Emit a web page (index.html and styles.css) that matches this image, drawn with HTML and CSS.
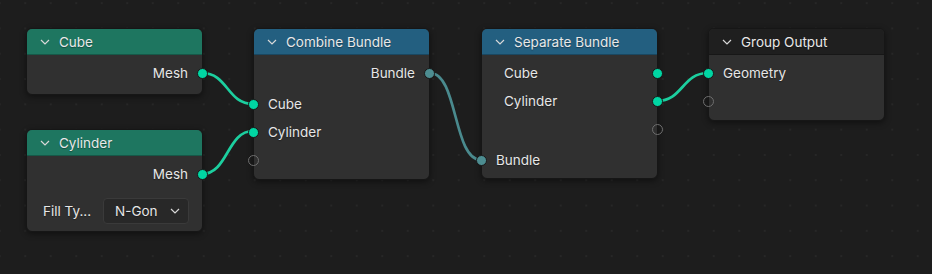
FILE: index.html
```html
<!DOCTYPE html>
<html lang="en">
<head>
    <meta charset="UTF-8">
    <title>Node Editor</title>
    <link rel="stylesheet" href="styles.css">
</head>
<body>
    <div class="canvas">
        <svg class="wires" width="932" height="274">
            <path class="wire wire-geo" d="M202,73 C228,73 227,104 253,104" />
            <path class="wire wire-geo" d="M202,174 C228,174 227,131 253,131" />
            <path class="wire wire-bundle" d="M430,73 C458,73 453,160 481,160" />
            <path class="wire wire-geo" d="M657,101 C683,101 682,73 708,73" />
        </svg>

        <!-- Cube -->
        <div class="node n-cube">
            <div class="node-header hd-geo">
                <svg class="chev" width="10" height="6"><path d="M1 1l4 4 4-4" /></svg>
                Cube
            </div>
            <div class="node-body pb-8">
                <div class="row out"><span>Mesh</span><i class="socket s-geo"></i></div>
            </div>
        </div>

        <!-- Cylinder -->
        <div class="node n-cylinder">
            <div class="node-header hd-geo">
                <svg class="chev" width="10" height="6"><path d="M1 1l4 4 4-4" /></svg>
                Cylinder
            </div>
            <div class="node-body pb-8">
                <div class="row out"><span>Mesh</span><i class="socket s-geo"></i></div>
                <div class="row prop">
                    <span class="prop-label">Fill Ty...</span>
                    <div class="dropdown">
                        <span>N-Gon</span>
                        <svg class="dd-chev" width="10" height="6"><path d="M1 1l4 4 4-4" /></svg>
                    </div>
                </div>
            </div>
        </div>

        <!-- Combine Bundle -->
        <div class="node n-combine">
            <div class="node-header hd-conv">
                <svg class="chev" width="10" height="6"><path d="M1 1l4 4 4-4" /></svg>
                Combine Bundle
            </div>
            <div class="node-body pb-6">
                <div class="row out"><span>Bundle</span><i class="socket s-bundle"></i></div>
                <div class="row in mt-3"><i class="socket s-geo"></i><span>Cube</span></div>
                <div class="row in"><i class="socket s-geo"></i><span>Cylinder</span></div>
                <div class="row in"><i class="socket s-empty"></i></div>
            </div>
        </div>

        <!-- Separate Bundle -->
        <div class="node n-separate">
            <div class="node-header hd-conv">
                <svg class="chev" width="10" height="6"><path d="M1 1l4 4 4-4" /></svg>
                Separate Bundle
            </div>
            <div class="node-body pb-5">
                <div class="row out item"><span>Cube</span><i class="socket s-geo"></i></div>
                <div class="row out item"><span>Cylinder</span><i class="socket s-geo"></i></div>
                <div class="row out item"><i class="socket s-empty"></i></div>
                <div class="row in mt-3"><i class="socket s-bundle"></i><span>Bundle</span></div>
            </div>
        </div>

        <!-- Group Output -->
        <div class="node n-output">
            <div class="node-header hd-out">
                <svg class="chev" width="10" height="6"><path d="M1 1l4 4 4-4" /></svg>
                Group Output
            </div>
            <div class="node-body pb-4">
                <div class="row in"><i class="socket s-geo"></i><span>Geometry</span></div>
                <div class="row in"><i class="socket s-empty"></i></div>
            </div>
        </div>
    </div>
</body>
</html>
```

FILE: styles.css
```css
* {
    margin: 0;
    padding: 0;
    box-sizing: border-box;
}

body {
    background: #1d1d1d;
    font-family: 'Inter', 'DejaVu Sans', sans-serif;
    font-size: 13.5px;
    color: #e6e6e6;
    overflow: hidden;
}

.canvas {
    position: relative;
    width: 932px;
    height: 274px;
    background-color: #1d1d1d;
    background-image: radial-gradient(circle, #272727 0.9px, transparent 1.3px);
    background-size: 25.5px 25.3px;
    background-position: 12.5px -9.5px;
}

.wires {
    position: absolute;
    left: 0;
    top: 0;
}

.wire {
    fill: none;
    stroke-width: 2.7;
    stroke-linecap: round;
}

.wire-geo {
    stroke: #1ccf9f;
}

.wire-bundle {
    stroke: #4a8a8e;
}

/* Nodes */
.node {
    position: absolute;
    width: 177px;
    background: #303030;
    border: 1px solid #161616;
    border-radius: 6px;
    box-shadow: 0 2px 6px rgba(0,0,0,0.45);
}

.n-cube { left: 26px; top: 28px; }
.n-cylinder { left: 26px; top: 129px; }
.n-combine { left: 253px; top: 28px; }
.n-separate { left: 481px; top: 28px; width: 177px; }
.n-output { left: 708px; top: 28px; }

.node-header {
    height: 26px;
    display: flex;
    align-items: center;
    padding-left: 13px;
    border-radius: 5px 5px 0 0;
    border-bottom: 1px solid rgba(0,0,0,0.25);
    color: #e8e8e8;
    text-shadow: 0 1px 1px rgba(0,0,0,0.35);
}

.hd-geo { background: #1e7660; }
.hd-conv { background: #235f80; }
.hd-out { background: #1f1f1f; }

.chev {
    margin-right: 9px;
    flex-shrink: 0;
}

.chev path,
.dd-chev path {
    fill: none;
    stroke: #d8d8d8;
    stroke-width: 1.2;
}

.node-body {
    padding-top: 4px;
}

.pb-4 { padding-bottom: 5px; }
.pb-5 { padding-bottom: 4px; }
.pb-6 { padding-bottom: 5px; }
.pb-8 { padding-bottom: 7px; }
.mt-3 { margin-top: 3px; }

.row {
    position: relative;
    height: 28px;
    display: flex;
    align-items: center;
    padding: 0 14px;
    text-shadow: 0 1px 1px rgba(0,0,0,0.35);
}

.row.out {
    justify-content: flex-end;
}

.row.out.item {
    justify-content: flex-start;
    padding-left: 22px;
}

.row.in {
    justify-content: flex-start;
}

/* Sockets */
.socket {
    position: absolute;
    top: 9px;
    width: 11px;
    height: 11px;
    border-radius: 50%;
    border: 1px solid #181818;
}

.row.out .socket { right: -6px; }
.row.in .socket { left: -6px; }

.s-geo { background: #00d6a3; }
.s-bundle { background: #4d8d91; }

.s-empty {
    background: transparent;
    border: 1.5px solid #6e6e6e;
    width: 11px;
    height: 11px;
}

/* Property row */
.row.prop {
    height: 26px;
    margin-top: 10px;
    padding: 0 13px 0 16px;
    justify-content: space-between;
}

.dropdown {
    width: 86px;
    height: 26px;
    display: flex;
    align-items: center;
    justify-content: space-between;
    padding: 0 8px 0 11px;
    background: #282828;
    border: 1px solid #3a3a3a;
    border-radius: 4px;
    color: #e6e6e6;
}
```
